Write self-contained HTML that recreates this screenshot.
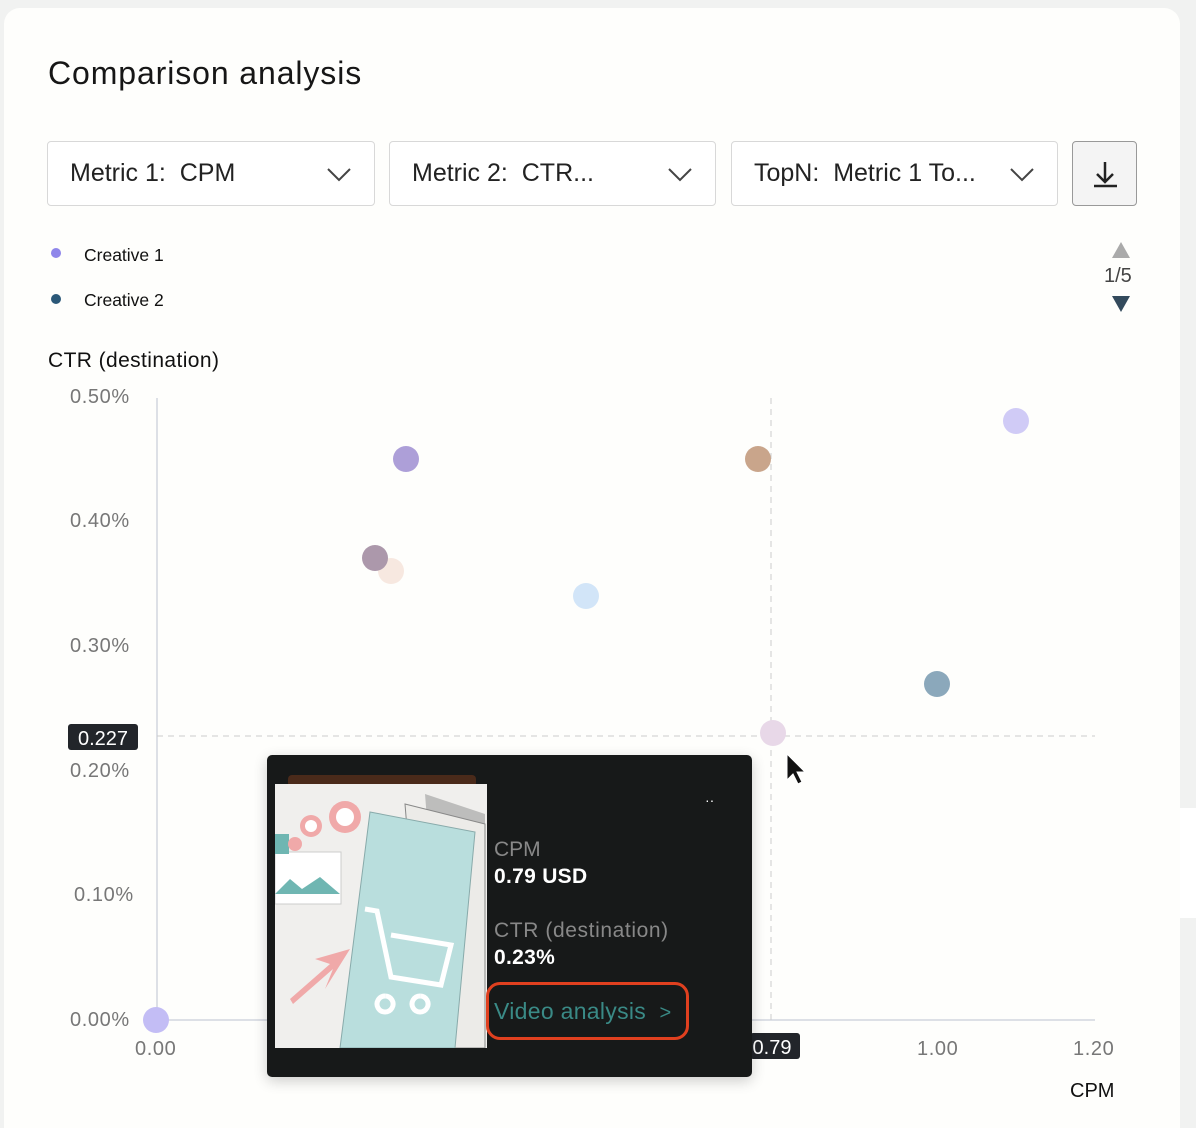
<!DOCTYPE html>
<html><head><meta charset="utf-8"><style>
*{margin:0;padding:0;box-sizing:border-box}
html,body{width:1196px;height:1128px;overflow:hidden}
body{background:#f1f2f1;font-family:"Liberation Sans",Arial,sans-serif;position:relative}
.card{position:absolute;left:4px;top:8px;width:1176px;height:1120px;background:#fefefc;border-radius:16px 16px 0 0}
.abs{position:absolute}
h1{position:absolute;left:48px;top:55px;font-size:32px;font-weight:400;color:#161616;letter-spacing:.9px}
.sel{position:absolute;top:141px;height:65px;border:1px solid #d8d8d8;border-radius:4px;background:#fff;font-size:25px;color:#222;padding-left:22px;line-height:63px}
.sel svg{position:absolute;right:22px;top:24px}
.dl{position:absolute;left:1072px;top:141px;width:65px;height:65px;border:1px solid #999;border-radius:4px;background:#f4f4f4}
.leg{position:absolute;font-size:17.5px;color:#111}
.dot{position:absolute;width:10px;height:10px;border-radius:50%}
.tick{position:absolute;font-size:20px;color:#777;letter-spacing:.6px}
</style></head><body>
<div class="card"></div>
<div class="abs" style="left:1180px;top:808px;width:16px;height:110px;background:#fff"></div>
<h1>Comparison analysis</h1>
<div class="sel" style="left:47px;width:328px">Metric 1:&nbsp; CPM<svg width="26" height="16"><path d="M2 3l11 11 11-11" fill="none" stroke="#444" stroke-width="2"/></svg></div>
<div class="sel" style="left:389px;width:327px">Metric 2:&nbsp; CTR...<svg width="26" height="16"><path d="M2 3l11 11 11-11" fill="none" stroke="#444" stroke-width="2"/></svg></div>
<div class="sel" style="left:731px;width:327px">TopN:&nbsp; Metric 1 To...<svg width="26" height="16"><path d="M2 3l11 11 11-11" fill="none" stroke="#444" stroke-width="2"/></svg></div>
<div class="dl"><svg width="65" height="65"><path d="M32 20v20M24 32l8 8 8-8M21 44h23" fill="none" stroke="#222" stroke-width="2.5"/></svg></div>
<div class="dot" style="left:51px;top:248px;background:#8f86ea"></div>
<div class="leg" style="left:84px;top:245px">Creative 1</div>
<div class="dot" style="left:51px;top:294px;background:#2b5878"></div>
<div class="leg" style="left:84px;top:290px">Creative 2</div>
<svg class="abs" style="left:1110px;top:240px" width="22" height="75"><path d="M2 18L11 2 20 18z" fill="#aaa"/><path d="M2 56L11 72 20 56z" fill="#334a5c"/></svg>
<div class="abs" style="left:1104px;top:265px;font-size:20px;color:#444">1/5</div>
<div class="abs" style="left:48px;top:349px;font-size:21px;color:#111;letter-spacing:.4px">CTR (destination)</div>
<div class="tick" style="left:70px;top:386px">0.50%</div>
<div class="tick" style="left:70px;top:510px">0.40%</div>
<div class="tick" style="left:70px;top:635px">0.30%</div>
<div class="tick" style="left:70px;top:760px">0.20%</div>
<div class="tick" style="left:74px;top:884px">0.10%</div>
<div class="tick" style="left:70px;top:1009px">0.00%</div>
<div class="tick" style="left:135px;top:1038px">0.00</div>
<div class="tick" style="left:917px;top:1038px">1.00</div>
<div class="tick" style="left:1073px;top:1038px">1.20</div>
<div class="abs" style="left:1070px;top:1080px;font-size:20px;color:#111">CPM</div>
<svg class="abs" style="left:0;top:0" width="1196" height="1128">
<line x1="157" y1="398" x2="157" y2="1020" stroke="#dde0e6" stroke-width="2"/>
<line x1="157" y1="1020" x2="1095" y2="1020" stroke="#dde0e6" stroke-width="2"/>
<line x1="157" y1="736" x2="1095" y2="736" stroke="#ccc" stroke-dasharray="6 5"/>
<line x1="771" y1="398" x2="771" y2="1020" stroke="#ccc" stroke-dasharray="6 5"/>
<circle cx="406" cy="459" r="13" fill="#ad9fd8"/>
<circle cx="758" cy="459" r="13" fill="#c9a58b"/>
<circle cx="391" cy="571" r="13" fill="#f7e8e0"/>
<circle cx="375" cy="558" r="13" fill="#ac98ab"/>
<circle cx="586" cy="596" r="13" fill="#d2e5f8"/>
<circle cx="1016" cy="421" r="13" fill="#d0cbf6"/>
<circle cx="937" cy="684" r="13" fill="#8ba8bb"/>
<circle cx="773" cy="733" r="13" fill="#e8d8e8"/>
<circle cx="156" cy="1020" r="13" fill="#c3bdf5"/>
<rect x="68" y="724" width="70" height="26" rx="3" fill="#22252a"/>
<text x="103" y="745" font-size="20" fill="#fff" text-anchor="middle" font-family="Liberation Sans">0.227</text>
<rect x="750" y="1033" width="50" height="26" rx="3" fill="#22252a"/>
<text x="772" y="1054" font-size="20" fill="#fff" text-anchor="middle" font-family="Liberation Sans">0.79</text>
<path d="M787 754v26l6-6 5 10 4-2-5-10h8z" fill="#111" stroke="#fff" stroke-width="1"/>
</svg>
<div class="abs" style="left:267px;top:755px;width:485px;height:322px;background:#171919;border-radius:5px;box-shadow:0 4px 14px rgba(0,0,0,.2)"></div>
<div class="abs" style="left:288px;top:775px;width:188px;height:12px;background:#4a2a1a;border-radius:4px"></div>
<svg class="abs" style="left:275px;top:784px" width="212" height="264">
<rect width="212" height="264" fill="#f0efed"/>
<path d="M150 10l60 20v234h-40z" fill="#bdbdbc"/>
<path d="M130 20l80 20v224H150z" fill="#ecebe8" stroke="#888"/>
<path d="M95 28l105 20-20 216H65z" fill="#b9dedd" stroke="#8aa"/>
<rect x="0" y="68" width="66" height="52" fill="#fff" stroke="#ccc"/>
<path d="M0 110l15-15 12 10 18-12 20 17H0z" fill="#6fb6b2"/>
<rect x="0" y="50" width="14" height="20" fill="#6fb6b2"/>
<circle cx="70" cy="33" r="16" fill="#f0a9a9"/><circle cx="70" cy="33" r="9" fill="#fff"/>
<circle cx="36" cy="42" r="11" fill="#f0a9a9"/><circle cx="36" cy="42" r="6" fill="#fff"/>
<circle cx="20" cy="60" r="7" fill="#f0a9a9"/>
<path d="M90 125l12 2 14 66 50 8 10-40-60-10M110 212a8 8 0 1 0 .1 0M145 212a8 8 0 1 0 .1 0" fill="none" stroke="#fff" stroke-width="5"/>
<path d="M18 220l40-35-8 20 25-40-35 10 15 5-40 35z" fill="#f0a9a9"/>
</svg>
<div class="abs" style="left:705px;top:792px;color:#fff;font-size:14px">··</div>
<div class="abs" style="left:494px;top:838px;font-size:21px;color:#888">CPM</div>
<div class="abs" style="left:494px;top:865px;font-size:21px;color:#fff;font-weight:bold;letter-spacing:.3px">0.79 USD</div>
<div class="abs" style="left:494px;top:919px;font-size:21px;color:#888;letter-spacing:.6px">CTR (destination)</div>
<div class="abs" style="left:494px;top:946px;font-size:21px;color:#fff;font-weight:bold;letter-spacing:.3px">0.23%</div>
<div class="abs" style="left:486px;top:982px;width:203px;height:58px;border:3px solid #e0401f;border-radius:14px"></div>
<div class="abs" style="left:494px;top:998px;font-size:23px;color:#3a8a86;letter-spacing:.3px">Video analysis&nbsp; <span style="font-size:20px">&gt;</span></div>
</body></html>
